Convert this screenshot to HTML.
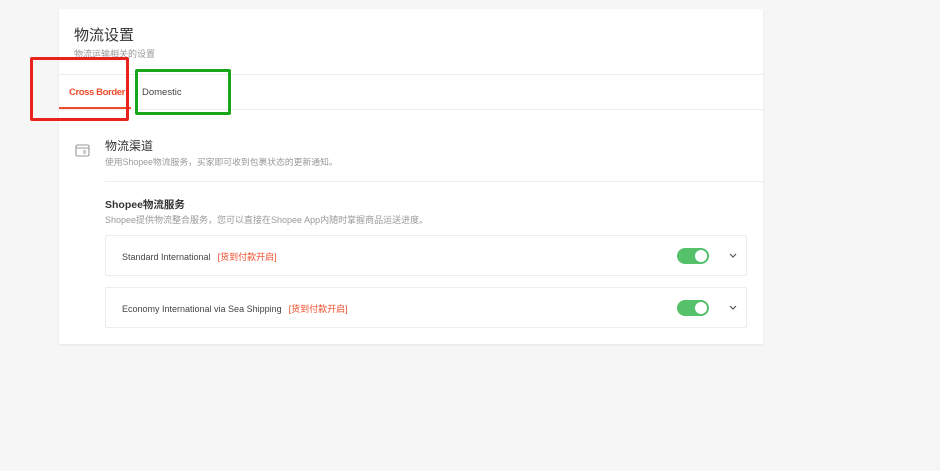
<!DOCTYPE html>
<html><head><meta charset="utf-8"><style>
*{margin:0;padding:0;box-sizing:border-box}
body{width:940px;height:471px;background:#f6f6f6;font-family:"Liberation Sans","Noto Sans CJK SC",sans-serif;position:relative;overflow:hidden}
.a{position:absolute}
.card{left:59px;top:9px;width:704px;height:335px;background:#fff;box-shadow:0 1px 2px rgba(0,0,0,.08)}
.item{left:105px;width:642px;height:41px;border:1px solid #ececec;border-radius:2px;background:#fff}
.item .t{position:absolute;left:16px;top:14px;font-size:9px;color:#444;white-space:nowrap}
.item .r{color:#ee4d2d;margin-left:7px}
.tg{position:absolute;left:571px;top:12px;width:32px;height:16px;border-radius:8px;background:#55c26b}
.tg:after{content:"";position:absolute;right:2px;top:2px;width:12px;height:12px;border-radius:50%;background:#fff}
.chev{position:absolute;left:623px;top:17px}
</style></head><body>
<div class="a card"></div>
<div class="a" style="left:74px;top:24px;font-size:15px;color:#333">物流设置</div>
<div class="a" style="left:74px;top:47px;font-size:9px;color:#999">物流运输相关的设置</div>
<div class="a" style="left:59px;top:74px;width:704px;height:1px;background:#ececec"></div>
<div class="a" style="left:59px;top:109px;width:704px;height:1px;background:#ececec"></div>
<div class="a" style="left:69px;top:87px;font-size:9.5px;color:#ee4d2d;font-weight:bold;letter-spacing:-0.4px">Cross Border</div>
<div class="a" style="left:59px;top:107px;width:72px;height:2px;background:#ee4d2d"></div>
<div class="a" style="left:142px;top:87px;font-size:9.5px;color:#444">Domestic</div>
<div class="a" style="left:30px;top:57px;width:99px;height:64px;border:3px solid #e8231c;border-radius:2px"></div>
<div class="a" style="left:135px;top:69px;width:96px;height:46px;border:3px solid #1aa61a;border-radius:2px"></div>
<svg class="a" style="left:75px;top:143px" width="15" height="14" viewBox="0 0 15 14"><rect x="1" y="2" width="13" height="11" rx="1.5" fill="none" stroke="#999" stroke-width="1.1"/><line x1="1" y1="5" x2="14" y2="5" stroke="#999" stroke-width="1"/><line x1="8" y1="8" x2="11" y2="8" stroke="#999"/><line x1="8" y1="10" x2="11" y2="10" stroke="#999"/></svg>
<div class="a" style="left:105px;top:137px;font-size:12px;color:#333">物流渠道</div>
<div class="a" style="left:105px;top:155px;font-size:8.8px;color:#999">使用Shopee物流服务，买家即可收到包裹状态的更新通知。</div>
<div class="a" style="left:105px;top:181px;width:658px;height:1px;background:#ececec"></div>
<div class="a" style="left:105px;top:197px;font-size:10.5px;color:#333;font-weight:bold">Shopee物流服务</div>
<div class="a" style="left:105px;top:213px;font-size:9px;color:#999">Shopee提供物流整合服务，您可以直接在Shopee App内随时掌握商品运送进度。</div>
<div class="a item" style="top:235px"><span class="t">Standard International<span class="r">[货到付款开启]</span></span><div class="tg"></div><svg class="chev" width="8" height="5" viewBox="0 0 8 5"><path d="M1 1L4 4L7 1" fill="none" stroke="#555" stroke-width="1.2"/></svg></div>
<div class="a item" style="top:287px"><span class="t">Economy International via Sea Shipping<span class="r">[货到付款开启]</span></span><div class="tg"></div><svg class="chev" width="8" height="5" viewBox="0 0 8 5"><path d="M1 1L4 4L7 1" fill="none" stroke="#555" stroke-width="1.2"/></svg></div>
</body></html>
